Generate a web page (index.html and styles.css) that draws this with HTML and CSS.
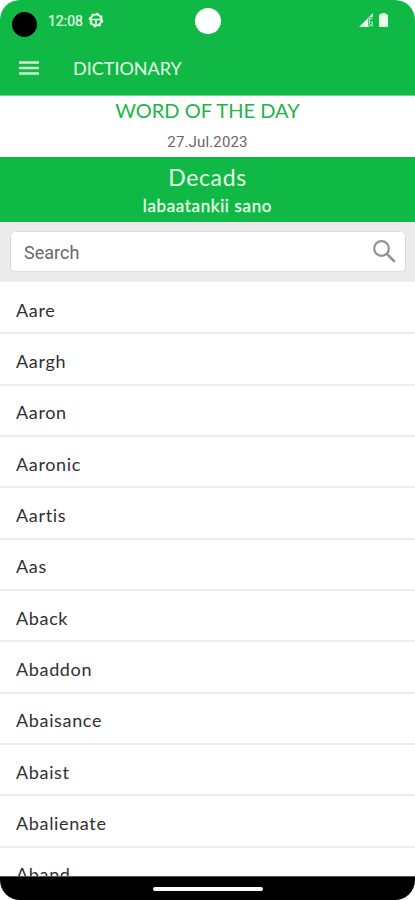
FILE: index.html
```html
<!DOCTYPE html>
<html lang="en">
<head>
<meta charset="utf-8">
<meta name="viewport" content="width=device-width, initial-scale=1">
<title>Dictionary</title>
<link rel="stylesheet" href="styles.css">
</head>
<body>
<div class="phone">
  <header class="top">
    <div class="status">
      <span class="lens"></span>
      <span class="clock">12:08</span>
      <svg class="gear" viewBox="0 0 16 16"><circle cx="8" cy="8" r="5.500" fill="none" stroke="currentColor" stroke-width="2"/><circle cx="8" cy="8" r="6.700" fill="none" stroke="currentColor" stroke-width="1.200" stroke-dasharray="2.600 2.662"/><path d="M3 7.500h10M8 8v5" fill="none" stroke="currentColor" stroke-width="1.600"/></svg>
      <span class="camera"></span>
      <svg class="signal" viewBox="0 0 14 14"><path d="M0 14 14 0v4h-3L9 6.500v5L10 14z" fill="currentColor"/><path d="M13.500 5.500h-2l-1.200 1.500v4l1.200 1.500h2V9.300h-1.700" fill="none" stroke="currentColor" stroke-width="1.500" opacity=".65"/></svg>
      <svg class="battery" viewBox="0 0 9 14"><path d="M2.500 0h4v1.200H8q1 0 1 1V13q0 1-1 1H1q-1 0-1-1V2.200q0-1 1-1h1.500z" fill="currentColor"/></svg>
    </div>
    <div class="appbar">
      <svg class="menu" viewBox="0 0 20 14"><path d="M0 1.500h20M0 7h20M0 12.500h20" stroke="currentColor" stroke-width="2.500"/></svg>
      <h1 class="title">DICTIONARY</h1>
    </div>
  </header>
  <section class="daily">
    <h2 class="heading">WORD OF THE DAY</h2>
    <p class="date">27.Jul.2023</p>
  </section>
  <section class="feature">
    <p class="word">Decads</p>
    <p class="meaning">labaatankii sano</p>
  </section>
  <div class="search">
    <div class="field">
      <span class="hint">Search</span>
      <svg class="glass" viewBox="0 0 23 23"><circle cx="8.500" cy="8.500" r="7.300" fill="none" stroke="currentColor" stroke-width="2.200"/><path d="m13.800 13.800 8 8" stroke="currentColor" stroke-width="2.600"/></svg>
    </div>
  </div>
  <ul class="list">
    <li>Aare</li>
    <li>Aargh</li>
    <li>Aaron</li>
    <li>Aaronic</li>
    <li>Aartis</li>
    <li>Aas</li>
    <li>Aback</li>
    <li>Abaddon</li>
    <li>Abaisance</li>
    <li>Abaist</li>
    <li>Abalienate</li>
    <li>Aband</li>
  </ul>
  <footer class="navbar"><span class="handle"></span></footer>
</div>
</body>
</html>
```
FILE: styles.css
```css
* { box-sizing: border-box; margin: 0; padding: 0; }
body { background: #fff; font-family: Lato, "Open Sans", sans-serif; }
svg { display: block; flex: none; }
.phone { width: 415px; height: 900px; border-radius: 20px; overflow: hidden; display: flex; flex-direction: column; background: #fff; }
.top { height: 96px; flex: none; background: #10b945; color: #e9fbe9; border-bottom: 1px solid #70d58d; }
.status { position: relative; height: 42px; display: flex; align-items: center; padding-left: 12px; }
.lens { width: 25px; height: 25px; border-radius: 50%; background: #000; margin-top: 6px; }
.clock { font: 400 14px/20px Roboto, sans-serif; margin-left: 11px; margin-top: -1px; width: 36px; white-space: nowrap; -webkit-text-stroke: .2px currentColor; }
.gear { width: 16px; height: 16px; margin-left: 4px; margin-top: -2px; }
.camera { width: 26px; height: 26px; border-radius: 50%; background: #fff; position: absolute; left: 195px; top: 8px; }
.signal { width: 14px; height: 14px; margin-left: auto; margin-top: -2px; }
.battery { width: 9px; height: 14px; margin: -2px 27px 0 6px; }
.appbar { display: flex; align-items: center; height: 52px; padding-left: 19px; }
.menu { width: 20px; height: 14px; color: #d0f6cc; margin-top: -1px; }
.title { font-size: 18px; font-weight: 400; line-height: 24px; margin-left: 34px; margin-top: -1px; }
.daily { height: 61px; flex: none; text-align: center; background: #fff; }
.heading { color: #1cb546; font-size: 20px; font-weight: 400; line-height: 28px; letter-spacing: .05px; }
.date { color: #686868; font: 400 15px/20px Roboto, sans-serif; margin-top: 8px; letter-spacing: .15px; }
.feature { height: 65px; flex: none; background: #10b945; color: #e9fbe9; text-align: center; padding-top: 6px; }
.word { font-size: 23px; line-height: 28px; letter-spacing: .65px; }
.meaning { font-size: 17px; line-height: 24px; margin-top: 3px; letter-spacing: .65px; -webkit-text-stroke: .3px currentColor; }
.search { height: 60px; flex: none; background: #ebebeb; padding: 9px 9px 10px 10px; }
.field { height: 41px; background: #fff; border: 1px solid #dcdce6; border-radius: 5px; display: flex; align-items: center; justify-content: space-between; padding: 0 9px 0 13px; }
.hint { color: #686868; font: 400 18px/24px Roboto, sans-serif; margin-top: 3px; }
.glass { width: 23px; height: 23px; color: #929292; }
.list { list-style: none; flex: 1; min-height: 0; overflow: hidden; color: #303030; padding-top: 1px; }
.list li { height: 51.350px; border-bottom: 2px solid #ededed; padding: 14.500px 16px 0; font-size: 18px; line-height: 24px; letter-spacing: .65px; }
.navbar { height: 24px; flex: none; background: #000; border-top: 1px solid #555; display: flex; justify-content: center; align-items: center; }
.handle { width: 110px; height: 4px; border-radius: 2px; background: #fff; }
```
